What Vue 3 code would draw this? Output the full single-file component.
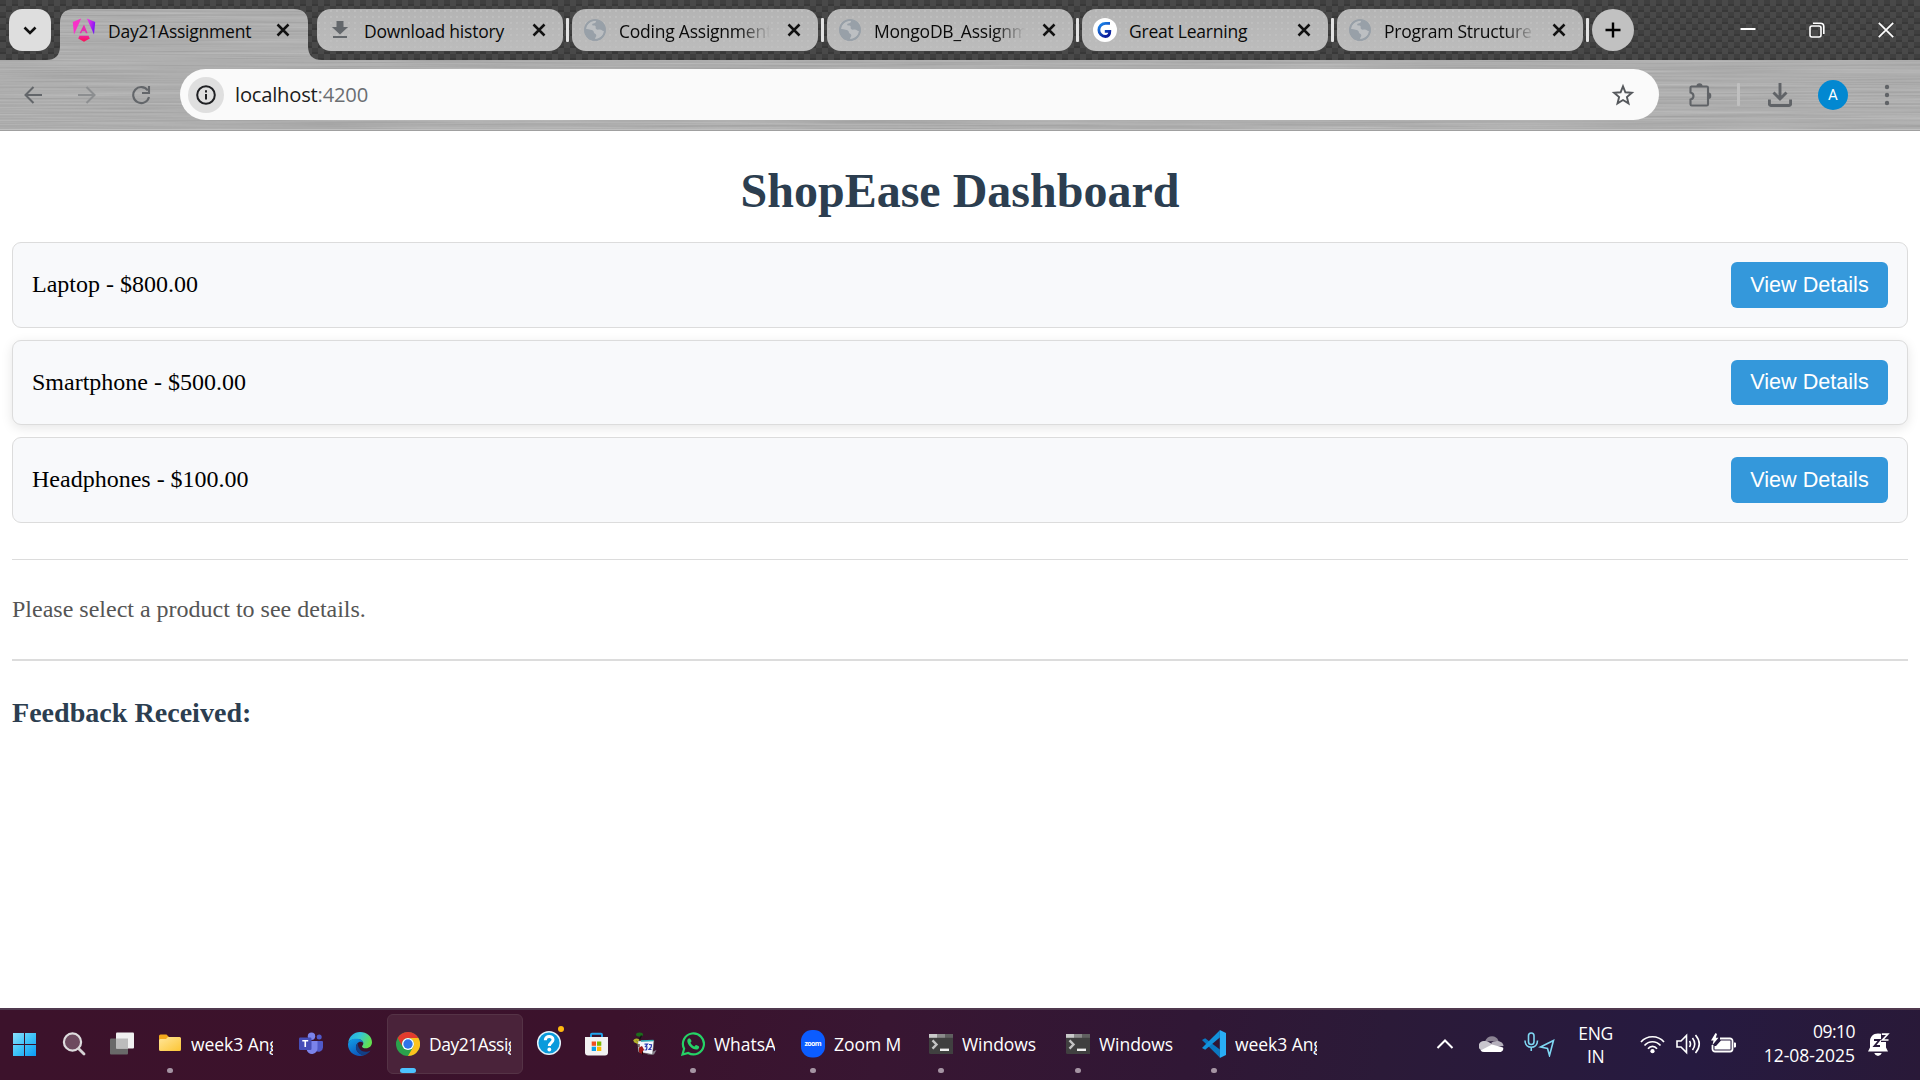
<script setup>
const tabs = [
  { title: 'Download history', icon: 'download' },
  { title: 'Coding Assignment', icon: 'globe', fade: true },
  { title: 'MongoDB_Assignment', icon: 'globe', fade: true },
  { title: 'Great Learning', icon: 'great' },
  { title: 'Program Structure', icon: 'globe', fade: true },
]

const products = [
  { name: 'Laptop', price: '$800.00' },
  { name: 'Smartphone', price: '$500.00', raised: true },
  { name: 'Headphones', price: '$100.00' },
]

const tasks = [
  { icon: 'start', w: 50 },
  { icon: 'search', w: 48 },
  { icon: 'views', w: 48 },
  { icon: 'folder', w: 141, label: 'week3 Ang', clip: 82, dot: true },
  { icon: 'teams', w: 49 },
  { icon: 'edge', w: 48 },
  { icon: 'chrome', w: 141, label: 'Day21Assig', clip: 82, active: true },
  { icon: 'help', w: 48 },
  { icon: 'store', w: 48 },
  { icon: 'clock', w: 48 },
  { icon: 'whatsapp', w: 120, label: 'WhatsA', clip: 61, dot: true },
  { icon: 'zoom', w: 128, label: 'Zoom M', clip: 71, dot: true },
  { icon: 'term', w: 137, label: 'Windows', clip: 77, dot: true },
  { icon: 'term', w: 136, label: 'Windows', clip: 77, dot: true },
  { icon: 'code', w: 137, label: 'week3 Ang', clip: 82, dot: true },
]
</script>

<template>
  <div class="screen">
    <header class="chrome">
      <svg class="chrome-bg" width="1920" height="131" viewBox="0 0 1920 131">
        <defs>
          <filter id="brushed" x="0" y="0" width="100%" height="100%" color-interpolation-filters="sRGB">
            <feTurbulence type="fractalNoise" baseFrequency="0.005 0.55" numOctaves="3" seed="4" />
            <feColorMatrix values="0.14 0 0 0 0.61  0.14 0 0 0 0.61  0.14 0 0 0 0.61  0 0 0 0 1" />
          </filter>
          <pattern id="weave" width="12" height="12" patternUnits="userSpaceOnUse">
            <rect width="12" height="12" fill="#494949" />
            <rect width="6" height="6" fill="#3f3f3f" />
            <rect x="6" y="6" width="6" height="6" fill="#3f3f3f" />
            <rect y="4" width="6" height="2" fill="#383838" />
            <rect x="6" y="10" width="6" height="2" fill="#383838" />
          </pattern>
        </defs>
        <rect width="1920" height="131" fill="#adadad" />
        <rect width="1920" height="131" filter="url(#brushed)" />
        <path fill="url(#weave)" d="M0 0H1920V60H322Q308 60 308 46V23Q308 9 294 9H74Q60 9 60 23V46Q60 60 46 60H0Z" />
        <rect y="129" width="1920" height="1" fill="#c0c0c0" />
        <rect y="130" width="1920" height="1" fill="#a0a0a0" />
      </svg>

      <div class="tabstrip">
        <div class="tab-search">
          <svg width="42" height="42" viewBox="0 0 42 42"><path d="M15.5 18.5l5.5 5.5 5.5-5.5" fill="none" stroke="#111" stroke-width="2.6" /></svg>
        </div>
        <div class="tab active">
          <svg class="fav" width="24" height="24" viewBox="0 0 24 24">
            <defs>
              <linearGradient id="ng" x1="0" y1="0.2" x2="1" y2="0.7"><stop offset="0" stop-color="#f637e3" /><stop offset="0.55" stop-color="#b222ee" /><stop offset="1" stop-color="#6a12f5" /></linearGradient>
              <linearGradient id="ng2" x1="0" y1="0" x2="0" y2="1"><stop offset="0" stop-color="#f0239c" /><stop offset="1" stop-color="#fb1050" /></linearGradient>
            </defs>
            <path fill="#f832c8" d="M9.2.5L.8 4l1.200 12.500z" />
            <path fill="url(#ng)" d="M14.800.5L23.200 4 22 16.500z" />
            <path fill="#e52fb0" d="M12 6.500l3.600 8.800h-1.700l-.8-2h-3l-.8 2H7.600z" />
            <path fill="url(#ng2)" d="M7.500 17.800h9l1.300 2.700L12 23.800l-5.800-3.300z" />
          </svg>
          <span class="tab-title">Day21Assignment</span>
          <svg class="close" width="14" height="14" viewBox="0 0 14 14"><path d="M1.500 1.500l11 11M12.500 1.500l-11 11" stroke="#111" stroke-width="2.500" /></svg>
        </div>
        <div class="tabs">
          <div v-for="t in tabs" :key="t.title" class="tab">
            <svg v-if="t.icon === 'download'" class="fav" width="24" height="24" viewBox="0 0 24 24">
              <path fill="#63676b" d="M8.500 3h7v6h4.600L12 16.500 3.900 9h4.600zM5 18h14v2H5z" />
            </svg>
            <svg v-else-if="t.icon === 'globe'" class="fav" width="24" height="24" viewBox="0 0 24 24">
              <circle cx="12" cy="12" r="10.800" fill="#98a0a8" />
              <path fill="#bcbfc2" d="M2.500 11.500c1-1 2.800-.2 5 .3 2 .4 3.200 1 3.400 2.700.3 1.500 2.200 1.200 2.400 2.700.2 1.500-1.200 1.700-1.200 3.700 5 0 8.300-3.500 9-7.600-1.500 0-2.300-1.800-4.300-1.800-1.500 0-2.500.6-3.700-.5-1-1 .1-2.300-.7-3-1.200-1.200-3.200.4-3.200-1.500 0-1.500 2.800-.8 3.400-2 .3-.7.5-1.400.6-2.100C7.500 2.300 3 6.500 2.500 11.500z" />
              <circle cx="12" cy="12" r="10" fill="none" stroke="#98a0a8" stroke-width="1.600" />
            </svg>
            <svg v-else class="fav" width="24" height="24" viewBox="0 0 24 24">
              <defs><linearGradient id="gl" x1="0" y1="0" x2="0.600" y2="1"><stop offset="0" stop-color="#1a8cf0" /><stop offset="1" stop-color="#0d1f9c" /></linearGradient></defs>
              <circle cx="12" cy="12" r="12" fill="#fff" />
              <path d="M17 5.300h-4.500a6.600 6.600 0 0 0 0 13.200c2.600 0 4.300-1.700 4.300-5.200h-5" fill="none" stroke="url(#gl)" stroke-width="2.800" />
            </svg>
            <span class="tab-title" :class="{ fade: t.fade }">{{ t.title }}</span>
            <svg class="close" width="14" height="14" viewBox="0 0 14 14"><path d="M1.500 1.500l11 11M12.500 1.500l-11 11" stroke="#111" stroke-width="2.500" /></svg>
          </div>
        </div>
        <div class="new-tab">
          <svg width="42" height="42" viewBox="0 0 42 42"><path d="M21 13.500v15M13.500 21h15" stroke="#000" stroke-width="2.400" /></svg>
        </div>
        <div class="window-controls">
          <svg width="16" height="16" viewBox="0 0 16 16"><path d="M.5 7h15" stroke="#fff" stroke-width="2" /></svg>
          <svg width="16" height="16" viewBox="0 0 16 16" fill="none" stroke="#fff" stroke-width="1.600"><rect x="1" y="4" width="11" height="11" rx="2" /><path d="M4 1.200h7.500a3.300 3.300 0 0 1 3.300 3.300V12" /></svg>
          <svg width="16" height="16" viewBox="0 0 16 16"><path d="M.8.8l14.400 14.400M15.200.8L.8 15.200" stroke="#fff" stroke-width="1.700" /></svg>
        </div>
      </div>

      <div class="toolbar">
        <div class="nav">
          <svg width="20" height="20" viewBox="0 0 20 20" fill="none" stroke="#63666a" stroke-width="2"><path d="M19 10H3M10.500 2L2.500 10l8 8" /></svg>
          <svg width="20" height="20" viewBox="0 0 20 20" fill="none" stroke="#8c8e90" stroke-width="2"><path d="M1 10h16M9.500 2l8 8-8 8" /></svg>
          <svg width="20" height="20" viewBox="0 0 20 20" fill="none" stroke="#63666a" stroke-width="2.100"><path d="M16.800 5.500A8 8 0 1 0 18 12" /><path d="M18 1v7h-7" /></svg>
        </div>
        <div class="omnibox">
          <span class="site-info">
            <svg width="20" height="20" viewBox="0 0 20 20"><circle cx="10" cy="10" r="8.800" fill="none" stroke="#1f2023" stroke-width="2" /><path d="M10 9v5.500M10 5.300v2.200" stroke="#1f2023" stroke-width="2" /></svg>
          </span>
          <span class="url">localhost<i>:4200</i></span>
          <svg class="star" width="24" height="24" viewBox="0 0 24 24"><path d="M12 3.300l2.400 6 6.500.5-5 4.200 1.600 6.400L12 17l-5.500 3.400L8.100 14l-5-4.200 6.500-.5z" fill="none" stroke="#55585c" stroke-width="1.900" /></svg>
        </div>
        <div class="actions">
          <svg class="ext" width="26" height="26" viewBox="0 0 26 26"><path d="M4.500 4.500h15.200a1.300 1.300 0 0 1 1.300 1.300v16.400a1.300 1.300 0 0 1-1.300 1.300H4.800a1.300 1.300 0 0 1-1.300-1.300v-4.700c4-1 4-6 0-7V5.800a1.300 1.300 0 0 1 1-1.300z" fill="none" stroke="#606367" stroke-width="2.100" /><path d="M9.500 4a3 2.800 0 0 1 6 0zM21.500 10.500a2.800 3.300 0 0 1 0 6.600z" fill="#606367" /></svg>
          <span class="divider"></span>
          <svg class="dl" width="24" height="24" viewBox="0 0 24 24" fill="none" stroke="#606367" stroke-width="2.900"><path d="M12 0v15.500M5.500 9.500l6.500 6.500 6.500-6.500" /><path d="M1.400 16.500v4.600a1.400 1.400 0 0 0 1.400 1.400h18.400a1.400 1.400 0 0 0 1.400-1.400v-4.600" /></svg>
          <span class="avatar">A</span>
          <svg class="kebab" width="6" height="22" viewBox="0 0 6 22" fill="#606367"><circle cx="3" cy="3" r="2.200" /><circle cx="3" cy="11" r="2.200" /><circle cx="3" cy="19" r="2.200" /></svg>
        </div>
      </div>
    </header>

    <main class="page">
      <h1>ShopEase Dashboard</h1>
      <ul class="products">
        <li v-for="p in products" :key="p.name" :class="{ raised: p.raised }">
          <span>{{ p.name }} - {{ p.price }}</span>
          <button type="button">View Details</button>
        </li>
      </ul>
      <section class="details"><p>Please select a product to see details.</p></section>
      <section class="feedback"><h3>Feedback Received:</h3></section>
    </main>

    <footer class="taskbar">
      <div class="tasks">
        <div v-for="(t, i) in tasks" :key="i" class="task" :class="{ current: t.active }" :style="{ width: t.w + 'px' }">
          <span class="icon">
            <svg v-if="t.icon === 'start'" width="24" height="24" viewBox="0 0 24 24">
              <defs><linearGradient id="win" x1="0" y1="0" x2="1" y2="1"><stop offset="0" stop-color="#8be0fc" /><stop offset="0.500" stop-color="#3fc3f8" /><stop offset="1" stop-color="#0a9bf5" /></linearGradient></defs>
              <path fill="url(#win)" d="M1 1h11v11H1zM13 1h11v11H13zM1 13h11v11H1zM13 13h11v11H13z" />
            </svg>
            <svg v-else-if="t.icon === 'search'" width="24" height="24" viewBox="0 0 24 24">
              <circle cx="10.500" cy="10" r="8.600" fill="#6d4a5f" stroke="#dedcde" stroke-width="2.200" /><path d="M17 17l5 5" stroke="#d5d2d4" stroke-width="2.800" stroke-linecap="round" />
            </svg>
            <svg v-else-if="t.icon === 'views'" width="24" height="24" viewBox="0 0 24 24">
              <rect x="0" y="6.500" width="18" height="16" rx="1" fill="#696969" /><rect x="6" y=".5" width="18" height="16" rx="1" fill="#f0f0f0" /><path fill="#bcbcbc" d="M6 6.500h12v10H6z" />
            </svg>
            <svg v-else-if="t.icon === 'folder'" width="24" height="24" viewBox="0 0 24 24">
              <defs><linearGradient id="fold" x1="0" y1="0" x2="1" y2="1"><stop offset="0" stop-color="#ffe69a" /><stop offset="1" stop-color="#fcc534" /></linearGradient></defs>
              <path fill="#f3a81c" d="M1 4a1.500 1.500 0 0 1 1.500-1.500h6L11 5h10a1.500 1.500 0 0 1 1.500 1.500V10H1z" /><path fill="url(#fold)" d="M1 8.500Q1 7 2.500 7H8l2-2h11.500Q23 5 23 6.500v11q0 1.500-1.500 1.500h-19Q1 19 1 17.500z" />
            </svg>
            <svg v-else-if="t.icon === 'teams'" width="24" height="24" viewBox="0 0 24 24">
              <circle cx="12.500" cy="4.200" r="3.700" fill="#7b83eb" /><circle cx="20.200" cy="5" r="2.500" fill="#5059c9" /><path fill="#5059c9" d="M16 9h7a1 1 0 0 1 1 1v5.500a4.500 4.500 0 0 1-7 3.500z" /><path fill="#7b83eb" d="M8 9h10.500v7a5.500 5.500 0 0 1-11 1z" /><rect y="5.500" width="12.500" height="12.500" rx="1.200" fill="#464eb8" /><path d="M3.300 8.800h5.900M6.250 9v6" stroke="#fff" stroke-width="1.600" />
            </svg>
            <svg v-else-if="t.icon === 'edge'" width="24" height="24" viewBox="0 0 24 24">
              <defs>
                <linearGradient id="e1" x1="0" y1="0" x2="1" y2=".4"><stop offset="0" stop-color="#1fa8e8" /><stop offset=".5" stop-color="#35c6d6" /><stop offset="1" stop-color="#62e050" /></linearGradient>
                <linearGradient id="e2" x1="0" y1="0" x2="0.500" y2="1"><stop offset="0" stop-color="#12a0e8" /><stop offset="1" stop-color="#0c59bd" /></linearGradient>
              </defs>
              <path fill="url(#e1)" d="M.3 10.500C1 4.500 6 0 12 0c7 0 12 4.800 12 10.300 0 3.800-2.800 6-6 6-2.700 0-4-1-4-1.800s1.300-1.200 1.300-3.200C15.300 8.500 12 7 8.500 7 4.500 7 1.500 8.500.3 10.500z" />
              <path fill="url(#e2)" d="M0 12.500C.3 8.500 4 6.800 8 6.800c4.500 0 7.300 2 7.300 4.500-1-1.500-3-1.800-4.500-1C7 12 7 18.500 11.500 21.500c1.500 1 3 1.600 4.500 1.800C8 26 0 20.500 0 12.500z" />
              <path fill="#123f86" d="M10 10.800C5.500 15 8.500 21.500 15.500 23.400c3-.8 5.500-2.600 7-5-3.500 2.200-9 2-11.500-2.400-1-1.700-1.200-3.700-1-5.200z" />
            </svg>
            <svg v-else-if="t.icon === 'chrome'" width="24" height="24" viewBox="0 0 24 24">
              <circle cx="12" cy="12" r="12" fill="#2ba24c" /><path fill="#e33b2e" d="M1.600 6A12 12 0 0 1 22.400 6H12a6 6 0 0 0-5.200 9z" /><path fill="#fcc31e" d="M22.400 6A12 12 0 0 1 12 24l5.200-9A6 6 0 0 0 12 6z" /><circle cx="12" cy="12" r="6" fill="#fff" /><circle cx="12" cy="12" r="4.700" fill="#2f74ea" />
            </svg>
            <svg v-else-if="t.icon === 'help'" class="wide" width="32" height="34" viewBox="0 0 32 34">
              <circle cx="16" cy="17" r="11.300" fill="#0b9bdc" stroke="#e4f2fa" stroke-width="1.500" /><path d="M12.300 14.200c0-5 7.700-4.800 7.700-.4 0 2.800-3.700 2.800-3.700 6.200" fill="none" stroke="#fff" stroke-width="3" /><circle cx="16.300" cy="23.500" r="1.900" fill="#fff" /><circle cx="28" cy="3" r="3" fill="#ffb90f" />
            </svg>
            <svg v-else-if="t.icon === 'store'" width="24" height="24" viewBox="0 0 24 24">
              <path d="M6 6V2.700a1 1 0 0 1 1-1h9a1 1 0 0 1 1 1V6" fill="none" stroke="#22a5ec" stroke-width="1.900" /><path fill="#f2f2f2" d="M0 5h23v15.500a3 3 0 0 1-3 3H3a3 3 0 0 1-3-3z" /><path fill="#f04e1f" d="M6.700 9.500H11v4.300H6.700z" /><path fill="#7db900" d="M12 9.500h4.300v4.300H12z" /><path fill="#0a9fe8" d="M6.700 14.700H11V19H6.700z" /><path fill="#fdb900" d="M12 14.700h4.300V19H12z" />
            </svg>
            <svg v-else-if="t.icon === 'clock'" width="24" height="24" viewBox="0 0 24 24">
              <path fill="#8b8590" d="M19 20l4.500-2-2.500 4.500h-7z" /><path fill="#f4f6fb" stroke="#555" stroke-width=".5" d="M4.500 9l16.500-.5-1.500 14-14-2.500z" /><path stroke="#2aa9b5" stroke-width="1.500" d="M8 9l12.500-.5" /><path d="M11.500 12.200h3l-2 2.500 1.500.3-.5 2.800-2 .2M16 12.500l2.500.2-.3 2.300-2.200 2.500h2.500" fill="none" stroke="#2a3ab0" stroke-width="1.200" /><path d="M.8 9c2-2.500 3.500-1.500 5.200-.5M1 9l4 2" fill="none" stroke="#b3b22a" stroke-width="2" /><ellipse cx="6.500" cy="2.500" rx="3.500" ry="2" fill="#1c6d1c" /><path d="M8.500 3.500l-2 4" stroke="#111" stroke-width="1.200" /><path fill="#9c1616" d="M6 15.500l3-1.500 2 3.500-2.500 4.500-2.500-2z" /><path d="M6 15v-3M9.500 22.500v-3" stroke="#200" />
            </svg>
            <svg v-else-if="t.icon === 'whatsapp'" width="24" height="24" viewBox="0 0 24 24">
              <path d="M1.500 22.500l1.600-5.800A10.500 10.500 0 1 1 7.200 21z" fill="none" stroke="#25d366" stroke-width="2.200" /><path fill="#25d366" d="M8.300 6.200c-.8 0-2 1-2 2.800 0 3.300 4.600 8.500 9 8.500 1.700 0 2.900-1.100 2.900-2.600 0-.6-2.800-2-3.300-1.800-.6.200-1 1.500-1.500 1.400-1.200-.3-3.700-2.500-3.900-3.700-.1-.5 1-1 1-1.600S9.400 6.200 8.300 6.200z" />
            </svg>
            <svg v-else-if="t.icon === 'zoom'" width="24" height="28" viewBox="0 0 24 28">
              <rect x="0" y="0" width="24" height="27.500" rx="11" fill="#0b5cff" /><text x="12" y="16" text-anchor="middle" textLength="17" font-family="Open Sans, sans-serif" font-weight="700" font-size="7" fill="#fff">zoom</text>
            </svg>
            <svg v-else-if="t.icon === 'term'" width="24" height="24" viewBox="0 0 24 24">
              <path fill="#404040" d="M0 2h24v20H1.500Q0 22 0 20.500z" /><path fill="#c9c9c9" d="M0 2h8v3.800H0z" /><path fill="#8b8b8b" d="M8 2h8v3.800H8z" /><path fill="#606060" d="M16 2h8v3.800h-8z" /><path d="M3.500 8.300l4 4.200-4 4.200" fill="none" stroke="#c4c4c4" stroke-width="2.400" /><path d="M11 17.800h9" stroke="#f0f0f0" stroke-width="2.400" />
            </svg>
            <svg v-else width="24" height="28" viewBox="0 0 24 28">
              <path fill="#0a78c2" d="M17.800 19.500L3.200 8.200 0 10l17.800 17.500z" /><path fill="#1292dc" d="M17.800 7.500L3.200 19.800 0 18 17.800.3z" /><path fill="#29adf5" d="M17.800 0L24 3v22l-6.200 3z" />
            </svg>
          </span>
          <span v-if="t.label" class="label" :class="{ tight: t.active }" :style="{ width: t.clip + 'px' }">{{ t.label }}</span>
          <i v-if="t.dot" class="dot"></i>
          <i v-if="t.active" class="dash"></i>
        </div>
      </div>
      <div class="tray">
        <svg class="chev" width="18" height="12" viewBox="0 0 18 12"><path d="M1.500 10L9 2.500 16.500 10" fill="none" stroke="#fff" stroke-width="2" /></svg>
        <svg class="cloud" width="25" height="18" viewBox="0 0 25 18"><path fill="#8b8393" d="M6 6.500C8 0 17.500-.5 19.500 6z" /><path fill="#c9c6ce" d="M5.500 6a5 5 0 0 1 4 1l8 4.500L4 16A5 5 0 0 1 5.500 6z" /><path fill="#b4afbb" d="M12 8c3-3 12-3 12.500 3L16 12z" /><path fill="#fff" d="M1.500 15.500L13 9.500l11 3c1 2-.7 4.500-3 4.500H5q-2 0-3.500-1.500z" /></svg>
        <svg class="mic" width="31" height="25" viewBox="0 0 31 25" fill="none" stroke="#7fd6f2" stroke-width="1.600"><rect x="4.500" y="1" width="5.500" height="11.500" rx="2.750" /><path d="M1 8.500c0 9 12.500 9 12.500 0M7.250 15.500V19" /><path d="M29.500 8.500L16.500 15l7 1.500 2 7z" /></svg>
        <div class="lang"><span>ENG</span><span>IN</span></div>
        <svg class="wifi" width="25" height="19" viewBox="0 0 25 19" fill="none" stroke="#fff" stroke-width="1.700"><path d="M1 7c6-7 17-7 23 0M4.500 10.500c4.500-5 11.500-5 16 0M8 13.700c2.500-3 6.500-3 9 0" /><circle cx="12.500" cy="16.200" r="2.100" fill="#fff" stroke="none" /></svg>
        <svg class="spk" width="25" height="22" viewBox="0 0 25 22" fill="none" stroke="#fff" stroke-width="1.600"><path d="M1 8h4l5.500-5.500v17L5 14H1z" /><path d="M13.500 8q2 3 0 6M16.500 5q4.500 6 0 12M19.500 2q7.500 9 0 18" /></svg>
        <svg class="bat" width="25" height="22" viewBox="0 0 25 22"><path d="M9 5.500h10a2.500 2.500 0 0 1 2.500 2.500v8a2.500 2.500 0 0 1-2.500 2.500H4A2.500 2.500 0 0 1 1.500 16v-4" fill="none" stroke="#fff" stroke-width="1.800" /><path fill="#fff" d="M10 7.500h9.500v9h-16v-3.500H5zM23 9.500h1a1 1 0 0 1 1 1v3a1 1 0 0 1-1 1h-1z" /><path fill="#fff" d="M4.500 0L0 7.500h2.500L1.500 12 7.500 4.800H4.800L6 1z" /></svg>
        <div class="time"><span>09:10</span><span>12-08-2025</span></div>
        <svg class="bell" width="22" height="25" viewBox="0 0 22 25"><path fill="#fff" d="M10 1.500c-5 0-8 3.500-8 8v6L0 19.500h20l-2-4V10h-5V1.800Q11.500 1.500 10 1.500zM6.200 21h7.600q-1.300 3-3.800 3t-3.800-3z" /><path d="M6 8h5.500L6.500 14h5.500" fill="none" stroke="#27193b" stroke-width="1.900" /><path d="M13.800 2.200h6L14.500 8h6" fill="none" stroke="#fff" stroke-width="1.700" /></svg>
      </div>
    </footer>
  </div>
</template>

<style>
body { margin: 0; overflow: hidden; background: #fff; }
</style>

<style scoped>
.screen { display: flex; flex-direction: column; width: 1920px; height: 1080px; background: #fff; overflow: hidden; }
svg { display: block; flex: none; }

.chrome { position: relative; height: 131px; font-family: "Open Sans", sans-serif; }
.chrome-bg { position: absolute; inset: 0; }
.tabstrip { position: relative; display: flex; height: 42px; padding: 9px 11px 9px 9px; color: #0a0a0a; }
.tab-search { width: 42px; height: 42px; border-radius: 13px; background: #dedede; }
.tab { position: relative; box-sizing: border-box; display: flex; align-items: center; width: 246px; height: 42px; padding-left: 11px; border-radius: 14px; }
.active { width: 248px; margin: 0 9px; padding-left: 12px; }
.tabs { display: flex; gap: 9px; }
.tabs .tab {
  background: radial-gradient(circle at 2px 2px, #c0c0c0 0.6px, transparent 1.1px) 0 0 / 6px 6px, linear-gradient(#b4b4b4, #bcbcbc);
}
.tabs .tab::after { content: ""; position: absolute; right: -6px; top: 9px; width: 3px; height: 24px; border-radius: 1px; background: #e2e2e2; }
.tabs .tab:first-child .fav { position: relative; left: 0; }
.tab-title {
  width: 153px; margin-left: 12px; overflow: hidden; white-space: nowrap;
  font-size: 17.5px; line-height: 24px; letter-spacing: -0.23px; padding-top: 2px;
}
.fade { mask-image: linear-gradient(90deg, #000 120px, transparent 151px); }
.close { margin-left: 15px; }
.new-tab { width: 42px; height: 42px; margin-left: 9px; border-radius: 50%; background: #c1c1c1; }
.window-controls { display: flex; align-items: center; gap: 53px; margin: -1px 15.5px 0 auto; }

.toolbar { position: relative; display: flex; align-items: center; height: 51px; padding-top: 9px; }
.nav { display: flex; gap: 34px; width: 157px; padding-left: 23px; }
.omnibox { display: flex; align-items: center; box-sizing: border-box; width: 1479px; height: 51px; padding: 0 24px 0 8px; border-radius: 26px; background: #fafafa; }
.site-info { display: flex; align-items: center; justify-content: center; width: 36px; height: 36px; border-radius: 50%; background: #dfdfdf; }
.url { margin: -2px 0 0 11px; font-size: 20.2px; line-height: 28px; letter-spacing: -0.22px; color: #1c1d20; }
.url i { font-style: normal; color: #6b6e72; }
.star { margin-left: auto; }
.actions { display: flex; align-items: center; margin-left: 28px; }
.divider { width: 3px; height: 23px; margin-left: 24px; border-radius: 1px; background: #c0c0c0; }
.dl { margin-left: 28px; }
.avatar { display: flex; align-items: center; justify-content: center; width: 30px; height: 30px; margin-left: 26px; border-radius: 50%; background: #0288d1; color: #fff; font: 400 15px/30px Roboto, sans-serif; }
.kebab { margin-left: 36px; }

.page { flex: 1; padding: 0 12px; font: 24px/27px "Liberation Serif", serif; color: #000; }
h1 { margin: 32px 0 24px; font-size: 48px; line-height: 55px; text-align: center; color: #2c3e50; }
.products { display: flex; flex-direction: column; gap: 12px; margin: 0; padding: 0; list-style: none; }
.products li { box-sizing: border-box; display: flex; align-items: center; justify-content: space-between; height: 85.6px; padding: 0 19px; border: 1px solid #dcdcdc; border-radius: 9px; background: #f8f9fb; }
.products .raised { box-shadow: 0 3px 12px rgba(0, 0, 0, 0.1); }
.products button { width: 157px; height: 45.6px; padding: 0; border: 0; border-radius: 6px; background: #3498db; color: #fff; font: 21.6px/26px "Liberation Sans", sans-serif; }
.details { margin-top: 36px; padding: 36px 0; border-top: 1px solid #dcdcdc; color: #555; }
.details p { margin: 0; }
.feedback { padding-top: 36px; border-top: 2px solid #dcdcdc; }
h3 { margin: 0; font-size: 28.08px; line-height: 32px; color: #2c3e50; }

.taskbar { box-sizing: border-box; display: flex; justify-content: space-between; height: 72px; border-top: 2px solid #50394f; background: linear-gradient(100deg, #3c122b 0%, #3b122c 32%, #381632 46%, #301735 62%, #2b1a38 72%, #261a40 88%, #291938 100%); color: #fff; font: 17.5px/24px "Open Sans", sans-serif; }
.tasks { display: flex; }
.task { position: relative; display: flex; align-items: center; height: 68px; }
.icon { position: relative; z-index: 1; display: flex; align-items: center; justify-content: center; flex: none; width: 24px; margin-left: 12px; }
.wide { margin: -5px -4px 0; position: relative; top: 1.5px; }
.label { position: relative; margin-left: 9px; overflow: hidden; white-space: nowrap; letter-spacing: -0.05px; }
.tight { letter-spacing: -0.5px; }
.dot { position: absolute; left: 21px; top: 58px; width: 6px; height: 5px; border-radius: 3px; background: #a594a3; }
.dash { position: absolute; left: 16px; top: 58px; width: 16px; height: 5px; border-radius: 3px; background: #4cc2ff; }
.current::before { content: ""; position: absolute; box-sizing: border-box; left: 3px; top: 4px; width: 136px; height: 60px; border: 1px solid #553346; border-radius: 6px; background: #4a233a; }
.tray { display: flex; align-items: center; height: 68px; margin-right: 30px; }
.chev { margin-right: 25px; }
.cloud { margin-right: 20px; }
.mic { margin-right: 23px; }
.lang { display: flex; flex-direction: column; align-items: center; width: 36px; margin: 1px 26px 0 0; line-height: 23px; letter-spacing: -0.3px; }
.wifi { margin-right: 11px; }
.spk { margin-right: 10px; }
.bat { margin-right: 28px; }
.time { display: flex; flex-direction: column; align-items: flex-end; margin: -2px 13px 0 0; line-height: 24px; }
.time span:first-child { letter-spacing: -0.5px; }
</style>
